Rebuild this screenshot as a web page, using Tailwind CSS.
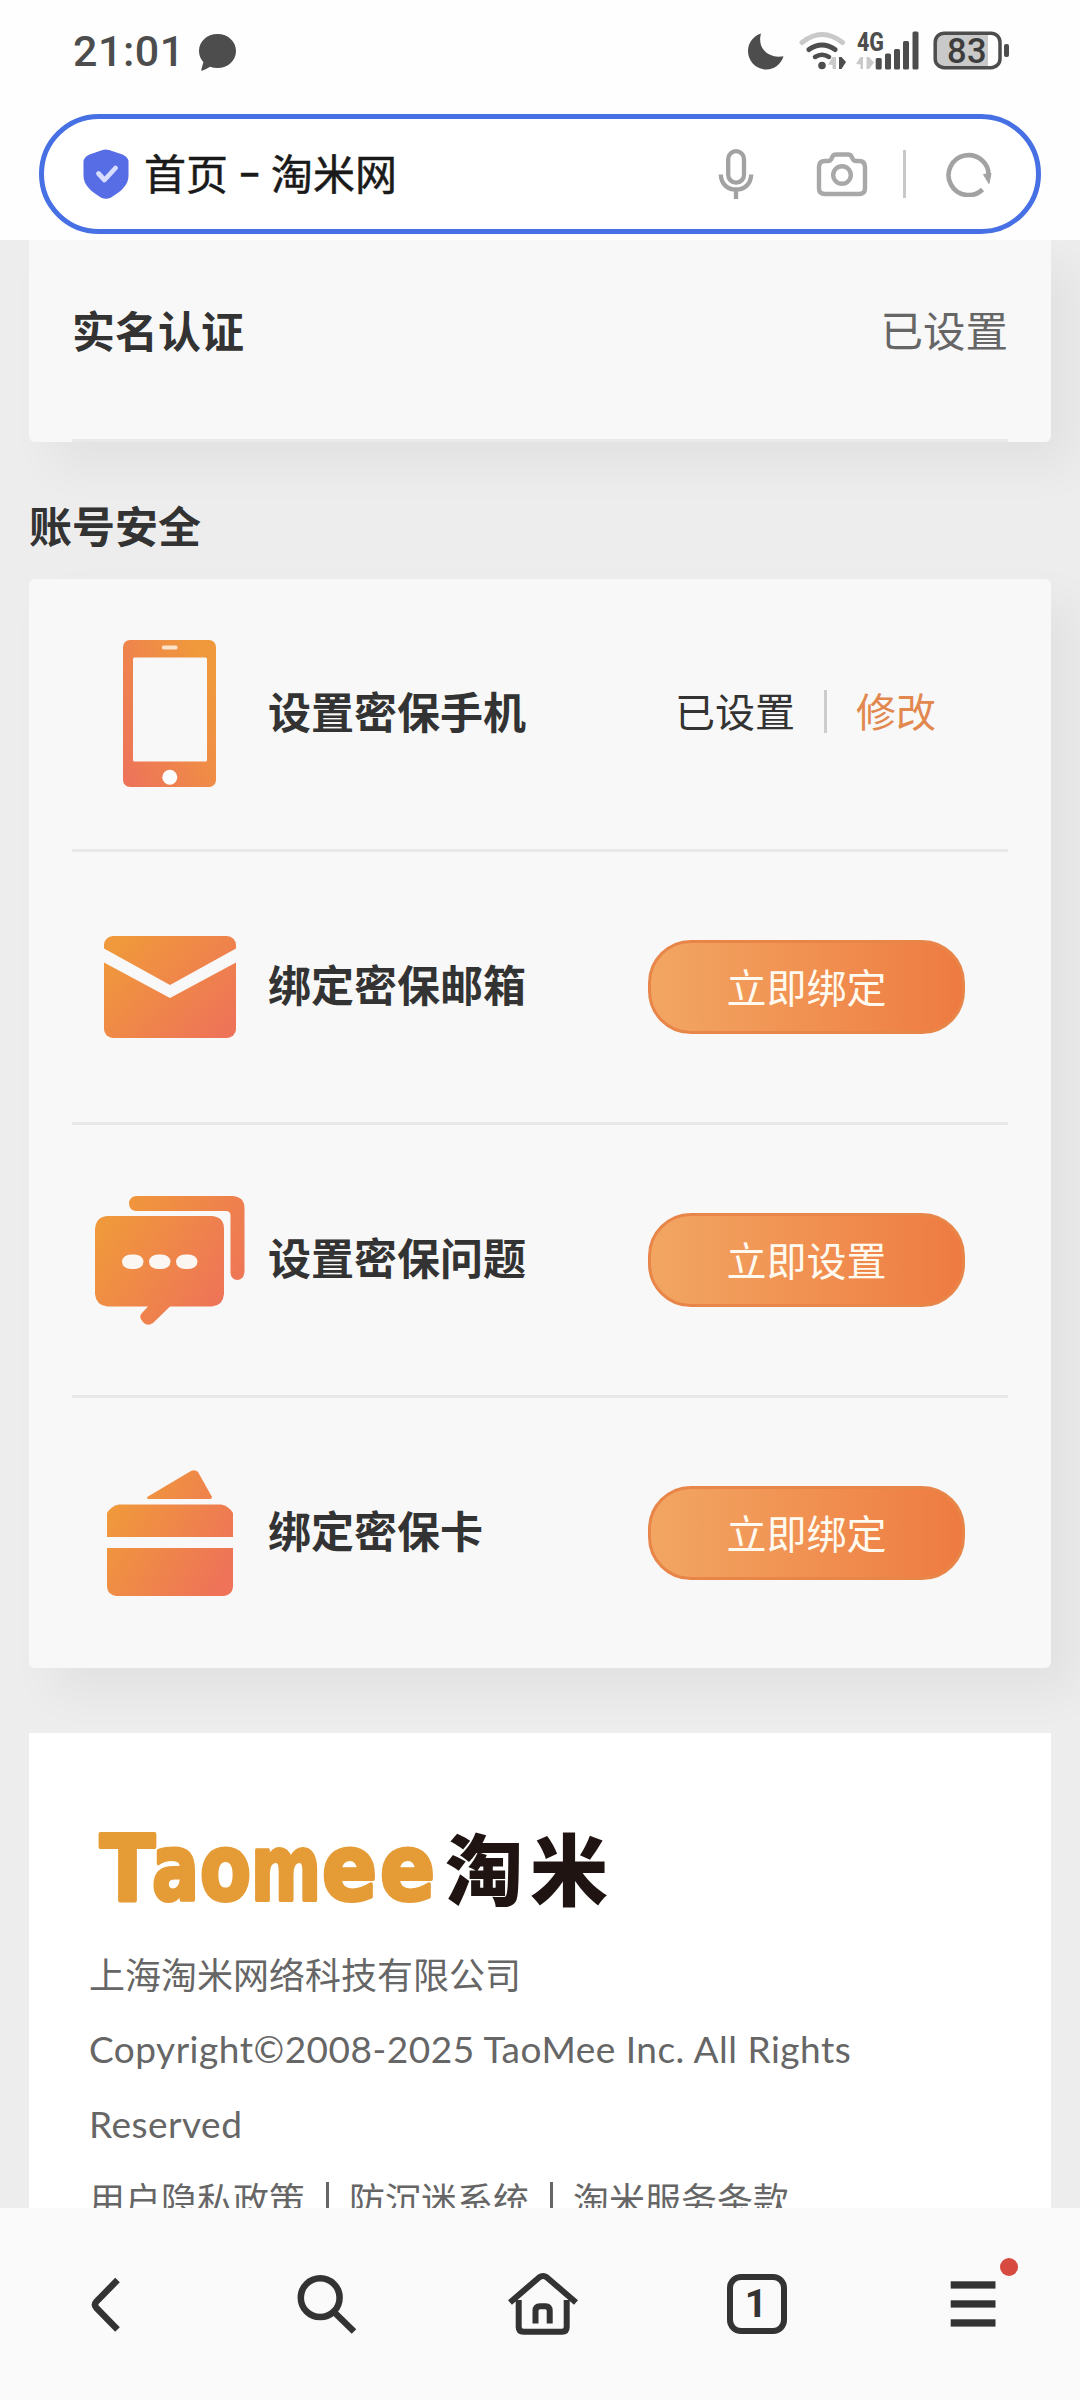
<!DOCTYPE html>
<html lang="zh-CN">
<head>
<meta charset="utf-8">
<title>首页 - 淘米网</title>
<script src="https://cdn.jsdelivr.net/npm/@tailwindcss/browser@4"></script>
</head>
<body class="w-[1080px] h-[2400px] overflow-hidden bg-[#ededed] font-['Noto_Sans_CJK_SC',sans-serif] text-[#333] flex flex-col">

<header class="h-[240px] shrink-0 bg-[#fefefe] px-[39px] relative z-10">
  <div class="h-[114px] flex items-start justify-between pl-[34px] pr-[31px] pt-[26px]">
    <div class="flex items-center h-[50px]">
      <span class="font-['Roboto',sans-serif] font-medium text-[43px] leading-[50px] tracking-[0.5px] w-[124px] text-[#4d4d4d]">21:01</span>
      <svg class="w-[40px] h-[40px]" viewBox="0 0 40 40" fill="#4d4d4d"><path d="M20.500 3C31 3 39 10.500 39 20C39 29.500 31 37 20.500 37Q16.500 37 13 35.800Q9 38.500 5 39.800Q4 40 4.300 38.800L6.400 31Q2 26.500 2 20C2 10.500 10 3 20.500 3Z"/></svg>
    </div>
    <svg class="w-[270px] h-[50px]" viewBox="740 26 270 50">
      <path d="M761 33.500C757 47 767 59 783.500 56.300C781 64.500 774 69.500 766.500 69.500C756 69.500 748 61 748 51C748 42.500 753.500 36 761 33.500Z" fill="#4d4d4d"/>
      <g fill="none" stroke-linecap="round">
        <path d="M802 42.500Q822 26.500 842.500 42.500" stroke="#c9c9c9" stroke-width="5"/>
        <path d="M809 49.500Q822 40.500 835 49.500" stroke="#4d4d4d" stroke-width="5"/>
        <path d="M815 57Q822 52.500 829 57" stroke="#4d4d4d" stroke-width="4.500"/>
      </g>
      <circle cx="822" cy="65.500" r="3.800" fill="#4d4d4d"/>
      <path d="M836 57V69H832.500V65L828 64.500L832.500 57Z" fill="#c9c9c9"/>
      <path d="M839 57H841.500L846 62L841.500 69H839Z" fill="#4d4d4d"/>
      <text x="857" y="51" font-family="Roboto" font-weight="800" font-size="26" textLength="27" lengthAdjust="spacingAndGlyphs" fill="#4d4d4d">4G</text>
      <path d="M863 57V69H860.500V64.500L856 64L860.500 57ZM866.500 57H869L874 62.500L869 69H866.500Z" fill="#c9c9c9"/>
      <g fill="#4d4d4d"><rect x="875.700" y="58" width="6" height="11.500" rx="1.500"/><rect x="885" y="53.500" width="6" height="16" rx="1.500"/><rect x="894" y="49" width="6" height="20.500" rx="1.500"/><rect x="903" y="41" width="6" height="28.500" rx="1.500"/><rect x="912.500" y="31.500" width="6" height="38" rx="1.500"/></g>
      <path d="M945 33H988V68H945Q935 68 935 57V44Q935 33 945 33Z" fill="#c9c9c9"/>
      <rect x="935.200" y="33.200" width="64.800" height="34.500" rx="9" fill="none" stroke="#4d4d4d" stroke-width="3.500"/>
      <rect x="1004" y="44" width="5" height="13" rx="2" fill="#4d4d4d"/>
      <text x="947" y="62.500" font-family="Roboto" font-weight="500" font-size="34.500" textLength="39.500" fill="#3d3d3d">83</text>
    </svg>
  </div>
  <div class="h-[120px] w-[1002px] rounded-full border-[5px] border-[#4670e4] bg-white flex items-center pl-[39px] pr-[44px]">
    <svg class="w-[46px] h-[50px]" viewBox="0 0 45 50"><path d="M19 1Q22 0 25.500 1L39 5.500Q45 8 45 13V27C45 36 37 43 27.500 48.500Q22.500 51 17.500 48.500C8 43 0 36 0 27V13Q0 8 6 5.500Z" fill="#566de5"/><path d="M15 24.500L21 31L32 19" fill="none" stroke="#d8ddff" stroke-width="4.800" stroke-linecap="round" stroke-linejoin="round"/></svg>
    <div class="ml-[15px] text-[42px] leading-[60px] text-[#1a1a1a] flex-1 mt-[-5px] flex items-center [-webkit-text-stroke:0.5px_#1a1a1a]"><span>首页</span><span class="w-[43px] flex justify-center font-['Inter',sans-serif] scale-x-125 pt-[3px]">-</span><span>淘米网</span></div>
    <svg class="w-[36px] h-[52px]" viewBox="0 0 36 52" fill="none" stroke="#a2a2a2" stroke-width="4.300"><rect x="10.200" y="3.200" width="15.800" height="31.500" rx="7.900"/><path d="M2.800 26.500C3 36 9.500 41.500 18 41.500S33 36 33.200 26.500M18 41.500V51"/></svg>
    <svg class="w-[52px] h-[46px] ml-[62px]" viewBox="0 0 52 46" fill="none" stroke="#a8a8a8" stroke-width="4.400"><path d="M9 10H12Q14.500 9.800 15.600 7.500L16.500 5.500Q17.500 3.500 20 3.500H32Q34.500 3.500 35.500 5.500L36.500 7.500Q37.500 10 40 10H43Q49 10 49 16V37.500Q49 43 43 43H9Q3 43 3 37.500V16Q3 10 9 10Z"/><circle cx="26" cy="24" r="8.800"/></svg>
    <div class="w-[3px] h-[48px] bg-[#c8c8c8] ml-[35px]"></div>
    <svg class="w-[46px] h-[46px] ml-[40px]" viewBox="0 0 46 46"><path d="M36.500 38.500A20 20 0 1 1 42.500 26" fill="none" stroke="#a2a2a2" stroke-width="4.600"/><path d="M37.500 23.500L45 22.500L43 32.500Z" fill="#a2a2a2" stroke="#a2a2a2"/></svg>
  </div>
</header>

<main class="px-[29px] h-[1968px] overflow-hidden">
  <section class="h-[202px] rounded-b-[6px] bg-[#f8f8f8] shadow-[24px_24px_48px_rgba(0,0,0,0.05)] px-[43px]">
    <div class="h-full border-b-[3px] border-[#e9e9e9] flex items-center justify-between pb-[21px]">
      <span class="text-[43px] leading-[60px] font-bold">实名认证</span>
      <span class="text-[42.500px] leading-[60px] text-[#666]">已设置</span>
    </div>
  </section>

  <h2 class="h-[137px] pt-[52px] text-[43px] leading-[60px] font-bold">账号安全</h2>

  <section class="rounded-[6px] bg-[#f8f8f8] shadow-[24px_24px_48px_rgba(0,0,0,0.05)] px-[43px]">
    <div class="h-[273px] border-b-[3px] border-[#e9e9e9] flex items-center pb-[1px]">
      <div class="w-[196px] pr-[1px] flex justify-center">
        <svg class="w-[93px] h-[147px]" viewBox="0 0 93 147"><defs><linearGradient id="gp" x1="0.900" y1="0.200" x2="0" y2="0.850"><stop offset="0" stop-color="#f0993c"/><stop offset="1" stop-color="#ed7459"/></linearGradient></defs><rect width="93" height="147" rx="7" fill="url(#gp)"/><rect x="10" y="17.500" width="74" height="104" rx="1.500" fill="#f8f8f8"/><rect x="39" y="5.500" width="15.500" height="4" rx="1.500" fill="#fde3cb"/><circle cx="46.800" cy="137.300" r="7.500" fill="#fdfdfd"/></svg>
      </div>
      <span class="w-[407px] text-[43px] leading-[60px] font-bold pb-[8px]">设置密保手机</span>
      <div class="flex items-center text-[40px] leading-[56px] h-[60px]">
        <span class="pb-[8px]">已设置</span><i class="w-[3px] h-[43px] bg-[#ccc] mx-[29px] mb-[4px]"></i><span class="text-[#e2884f] pb-[8px]">修改</span>
      </div>
    </div>
    <div class="h-[273px] border-b-[3px] border-[#e9e9e9] flex items-center">
      <div class="w-[196px] pr-[1px] flex justify-center">
        <svg class="w-[132px] h-[102px]" viewBox="0 0 132 102"><defs><linearGradient id="gm" x1="0" y1="0.150" x2="1" y2="0.850"><stop offset="0.050" stop-color="#f0983c"/><stop offset="1" stop-color="#ee7358"/></linearGradient></defs><rect width="132" height="102" rx="9" fill="url(#gm)"/><path d="M-1 12L66 49L133 12V26L66 62L-1 26Z" fill="#f8f8f8"/></svg>
      </div>
      <span class="w-[380px] text-[43px] leading-[60px] font-bold pb-[8px]">绑定密保邮箱</span>
      <button class="w-[317px] h-[94px] rounded-[43px] border-[3px] border-[#e88549] bg-linear-to-r from-[#f2a662] to-[#ee7b41] text-[#fffaf0] text-[40px] leading-[60px] pb-[3px]">立即绑定</button>
    </div>
    <div class="h-[273px] border-b-[3px] border-[#e9e9e9] flex items-center">
      <div class="w-[196px] pr-[1px] flex justify-center">
        <svg class="w-[150px] h-[129px]" viewBox="0 0 150 129"><defs><linearGradient id="gq" gradientUnits="userSpaceOnUse" x1="10" y1="30" x2="130" y2="105"><stop offset="0" stop-color="#f0983c"/><stop offset="1" stop-color="#ee7358"/></linearGradient><linearGradient id="gb" gradientUnits="userSpaceOnUse" x1="34" y1="5" x2="150" y2="70"><stop offset="0" stop-color="#f0963c"/><stop offset="1" stop-color="#ee7755"/></linearGradient></defs><path d="M41 0H138Q149.500 1 149.500 12V76Q148.500 84 142 84Q136 83 135.500 77V19Q135 15 131 15H41Q34 14 34 7.500Q34 1 41 0Z" fill="url(#gb)"/><path d="M12 20H117Q129 21 129 33V98Q128 109.500 117 110.500H75L58 127Q52 131 48 126Q43 121 47 117L53 110.500H12Q1 109 0 98V33Q1 21 12 20Z" fill="url(#gq)"/><g fill="#fbf6f1"><rect x="27" y="58.500" width="21.500" height="14.500" rx="9" ry="7.200"/><rect x="54" y="58.500" width="21.500" height="14.500" rx="9" ry="7.200"/><rect x="81" y="58.500" width="21.500" height="14.500" rx="9" ry="7.200"/></g></svg>
      </div>
      <span class="w-[380px] text-[43px] leading-[60px] font-bold pb-[8px]">设置密保问题</span>
      <button class="w-[317px] h-[94px] rounded-[43px] border-[3px] border-[#e88549] bg-linear-to-r from-[#f2a662] to-[#ee7b41] text-[#fffaf0] text-[40px] leading-[60px] pb-[3px]">立即设置</button>
    </div>
    <div class="h-[270px] flex items-center">
      <div class="w-[196px] pr-[1px] flex justify-center">
        <svg class="w-[126px] h-[126px]" viewBox="0 0 126 126"><defs><linearGradient id="gc" gradientUnits="userSpaceOnUse" x1="5" y1="45" x2="115" y2="110"><stop offset="0" stop-color="#f0983c"/><stop offset="1" stop-color="#ee7358"/></linearGradient></defs><g fill="url(#gc)"><path d="M84 1Q88-1 91 2L105 27Q105 29 103 29H41Q39 28 41 26.500Z"/><path d="M12 34.500H114Q122 36 126 43V67H0V43Q4 36 12 34.500Z"/><path d="M0 78H126V117Q125 125 117 126H9Q1 125 0 117Z"/></g></svg>
      </div>
      <span class="w-[380px] text-[43px] leading-[60px] font-bold pb-[8px]">绑定密保卡</span>
      <button class="w-[317px] h-[94px] rounded-[43px] border-[3px] border-[#e88549] bg-linear-to-r from-[#f2a662] to-[#ee7b41] text-[#fffaf0] text-[40px] leading-[60px] pb-[3px]">立即绑定</button>
    </div>
  </section>

  <footer class="mt-[65px] h-[520px] bg-white px-[60px] pt-[85px] text-[36px] leading-[75px] text-[#666]">
    <svg class="w-[530px] h-[118px] overflow-visible" viewBox="89 1818 530 118">
      <text y="1900" font-family="DejaVu Sans" font-weight="700" font-size="90" fill="#e59b36" stroke="#e59b36" stroke-width="4" stroke-linejoin="round"><tspan x="100" textLength="55" lengthAdjust="spacingAndGlyphs">T</tspan><tspan x="152" textLength="47" lengthAdjust="spacingAndGlyphs">a</tspan><tspan x="200" textLength="51" lengthAdjust="spacingAndGlyphs">o</tspan><tspan x="251" textLength="70" lengthAdjust="spacingAndGlyphs">m</tspan><tspan x="322" textLength="55" lengthAdjust="spacingAndGlyphs">e</tspan><tspan x="380" textLength="55" lengthAdjust="spacingAndGlyphs">e</tspan></text>
      <text x="445 530" y="1900" font-family="Noto Sans CJK SC" font-weight="900" font-size="78" fill="#1f1411">淘米</text>
    </svg>
    <p>上海淘米网络科技有限公司</p>
    <p class="font-['Lato','Noto_Sans_CJK_SC',sans-serif] w-[800px] text-[37px] tracking-[0.500px]">Copyright©2008-2025 TaoMee Inc. All Rights Reserved</p>
    <p class="flex items-center"><span>用户隐私政策</span><i class="w-[3px] h-[34px] bg-[#666] mx-[20.500px]"></i><span>防沉迷系统</span><i class="w-[3px] h-[34px] bg-[#666] mx-[20.500px]"></i><span>淘米服务条款</span></p>
  </footer>
</main>

<nav class="h-[192px] shrink-0 bg-[#fafafa] grid grid-cols-5 place-items-center relative z-10">
  <svg class="w-[96px] h-[96px]" viewBox="0 0 96 96" fill="none" stroke="#333" stroke-width="6.500"><path d="M57.500 24L36.500 45.500Q33.500 48.700 36.500 52L57.500 73.500"/></svg>
  <svg class="w-[96px] h-[96px]" viewBox="0 0 96 96" fill="none" stroke="#333" stroke-width="6.500"><circle cx="44.200" cy="41.700" r="19.400"/><path d="M58 56L78 75.500"/></svg>
  <svg class="w-[96px] h-[96px]" viewBox="0 0 96 96" fill="none" stroke="#333" stroke-width="6"><path d="M18 46.500L47 21.500Q51 18.500 55 21.500L84 46.500"/><path d="M26.700 44V71Q26.700 75.800 31.500 75.800H70Q74.700 75.800 74.700 71V44"/><path d="M43.500 67.500V55Q43.500 50.300 48 50.300H53.500Q57.700 50.300 57.700 55V67.500"/></svg>
  <div class="w-[96px] h-[96px] flex items-center justify-center pl-[2px]">
    <div class="w-[60px] h-[60px] rounded-[14px] border-[6px] border-[#333] flex items-center justify-center font-['Roboto',sans-serif] font-bold text-[39px] leading-[48px] pr-[2px]">1</div>
  </div>
  <svg class="w-[96px] h-[96px] overflow-visible" viewBox="0 0 96 96" fill="#333"><rect x="26.700" y="25.300" width="44.800" height="7.300"/><rect x="26.700" y="44.300" width="44.800" height="7.300"/><rect x="26.700" y="63.300" width="44.800" height="7.300"/><circle cx="85" cy="11" r="9" fill="#d64a40"/></svg>
</nav>
</body>
</html>
